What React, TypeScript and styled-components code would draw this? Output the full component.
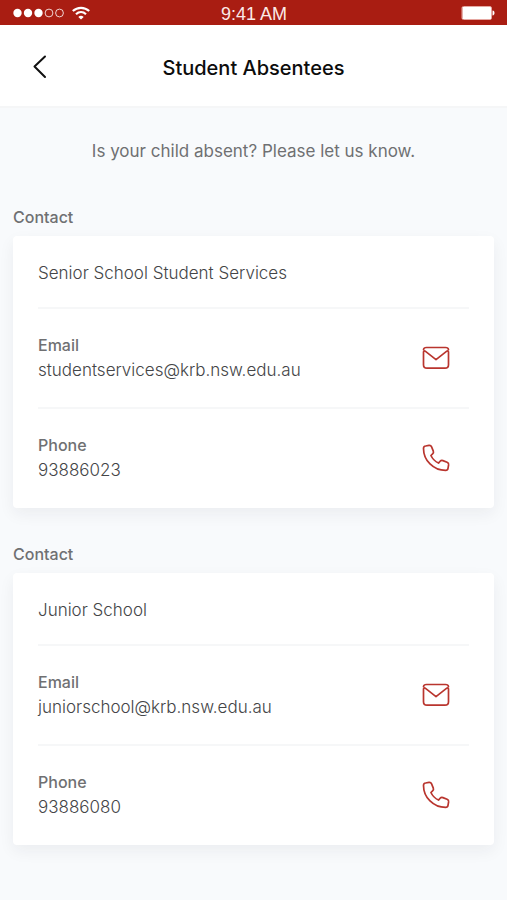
import React from "react";
import styled, { createGlobalStyle } from "styled-components";

const GlobalStyle = createGlobalStyle`
  * { box-sizing: border-box; }
  body {
    margin: 0;
    background: #f8fafc;
    font-family: Inter, "Liberation Sans", sans-serif;
  }
`;

const Page = styled.div`
  min-height: 100vh;
  background: #f8fafc;
`;

const StatusBar = styled.div`
  display: grid;
  grid-template-columns: 1fr auto 1fr;
  align-items: center;
  height: 25px;
  padding: 0 12px 0 13px;
  background: #a91d12;
  color: #fff;
`;

const Signal = styled.div`
  display: flex;
  align-items: center;
  gap: 7px;
`;

const Clock = styled.span`
  padding-top: 3px;
  font: 400 18px/22px "Liberation Sans", Arial, sans-serif;
  color: #fbe9e7;
`;

const BatterySlot = styled.div`
  display: flex;
  justify-content: flex-end;
`;

const Header = styled.header`
  display: grid;
  grid-template-columns: 48px 1fr 48px;
  align-items: center;
  height: 83px;
  padding: 2px 16px 0;
  background: #fff;
  border-bottom: 2px solid #f5f6f7;
`;

const BackButton = styled.button`
  display: flex;
  align-items: center;
  justify-content: center;
  width: 48px;
  height: 48px;
  padding: 0;
  border: 0;
  background: none;
  color: #111;
  cursor: pointer;
`;

const Title = styled.h1`
  margin: 0;
  padding-top: 2px;
  text-align: center;
  font-size: 20px;
  line-height: 24px;
  font-weight: 500;
  color: #0c0c0c;
`;

const Content = styled.main`
  padding: 31px 13px 24px;
`;

const Intro = styled.p`
  margin: 0 0 42px;
  text-align: center;
  font-size: 17px;
  line-height: 24px;
  color: #6f7072;
`;

const Section = styled.section`
  margin-bottom: 34px;
`;

const SectionTitle = styled.h2`
  margin: 0 0 7px;
  font-size: 16px;
  line-height: 24px;
  font-weight: 500;
  color: #6f7072;
`;

const Card = styled.div`
  padding: 0 25px 1px;
  border-radius: 4px;
  background: #fff;
  box-shadow: 0 6px 16px rgba(30, 40, 50, 0.06);
`;

const Name = styled.div`
  display: flex;
  align-items: center;
  height: 71px;
  padding-top: 2px;
  font-size: 17px;
  line-height: 24px;
  font-weight: 350;
  color: #444547;
`;

const Row = styled.div`
  display: flex;
  align-items: center;
  justify-content: space-between;
  height: 100px;
  padding-right: 19px;
  border-top: 2px solid #f6f7f8;
`;

const Label = styled.div`
  font-size: 16px;
  line-height: 25px;
  font-weight: 500;
  color: #6f7072;
`;

const Value = styled.div`
  font-size: 17px;
  line-height: 25px;
  font-weight: 350;
  color: #444547;
`;

const Action = styled.a`
  display: flex;
  color: #b9352e;
`;

const SignalIcon = () => (
  <svg width="52" height="10" viewBox="0 0 52 10" fill="#fff" stroke="#fff">
    <circle cx="4.500" cy="5" r="4.200" stroke="none" />
    <circle cx="15" cy="5" r="4.200" stroke="none" />
    <circle cx="25.500" cy="5" r="4.200" stroke="none" />
    <circle cx="36" cy="5" r="3.900" fill="none" strokeWidth="0.8" />
    <circle cx="46.500" cy="5" r="3.900" fill="none" strokeWidth="0.8" />
  </svg>
);

const WifiIcon = () => (
  <svg width="18" height="14" viewBox="0 0 18 14" fill="none" stroke="#fff" strokeWidth="2.2">
    <path d="M.8 5C5.500.700 12.500.700 17.200 5" />
    <path d="M4 8.200c2.900-2.700 7.100-2.700 10 0" />
    <path d="M9 13.600 6.300 10.900c1.600-1.400 3.800-1.400 5.400 0z" fill="#fff" stroke="none" />
  </svg>
);

const BatteryIcon = () => (
  <svg width="34" height="14" viewBox="0 0 34 14" fill="#fff">
    <rect x="1" y=".5" width="29.500" height="13" rx="1.500" fill="none" stroke="#e6a8a2" />
    <rect x="1.500" y="1" width="28.500" height="12" rx=".5" />
    <path d="M31.500 4.500c1.500.300 2 1.200 2 2.500s-.5 2.200-2 2.500z" />
  </svg>
);

const BackIcon = () => (
  <svg width="14" height="24" viewBox="0 0 14 24" fill="none" stroke="currentColor" strokeWidth="2" strokeLinecap="round" strokeLinejoin="round">
    <path d="M12 1.500 1.500 11.500 12 22" />
  </svg>
);

const MailIcon = () => (
  <svg width="28" height="24" viewBox="0 0 28 24" fill="none" stroke="currentColor" strokeWidth="1.700" strokeLinecap="round" strokeLinejoin="round">
    <path d="M1.500 3.600C1.700 2.200 2.700 1.500 4.500 1.500h19c1.800 0 2.800.700 3 2.100" />
    <path d="M14 13.600 3.200 5.200C2.300 4.600 1.500 5 1.500 6v12.700c0 2.300 1.200 3.500 3.500 3.500h18c2.300 0 3.500-1.200 3.500-3.500V6c0-1-.8-1.400-1.700-.8z" />
  </svg>
);

const PhoneIcon = () => (
  <svg width="28" height="28" viewBox="0 0 28 28" fill="none" stroke="currentColor" strokeWidth="1.700" strokeLinecap="round" strokeLinejoin="round">
    <path d="M3.500 2 7 1.400C8.400 1.200 9.100 1.700 9.600 2.900l1.700 4.200c.4 1.100.2 2-.7 2.800L8.900 11.500c1.700 3.500 4.200 6 7.600 7.600l1.600-1.800c.8-.9 1.700-1.100 2.800-.7l4.200 1.700c1.200.5 1.700 1.200 1.500 2.600L26 24.400c-.2 1.400-1 2-2.400 2C11.500 26.400 1.500 16.500 1.500 4.400c0-1.400.6-2.200 2-2.400z" />
  </svg>
);

const contacts = [
  { name: "Senior School Student Services", email: "studentservices@krb.nsw.edu.au", phone: "93886023" },
  { name: "Junior School", email: "juniorschool@krb.nsw.edu.au", phone: "93886080" },
];

export default function App() {
  return (
    <Page>
      <GlobalStyle />
      <StatusBar>
        <Signal><SignalIcon /><WifiIcon /></Signal>
        <Clock>9:41 AM</Clock>
        <BatterySlot><BatteryIcon /></BatterySlot>
      </StatusBar>
      <Header>
        <BackButton aria-label="Back"><BackIcon /></BackButton>
        <Title>Student Absentees</Title>
      </Header>
      <Content>
        <Intro>Is your child absent? Please let us know.</Intro>
        {contacts.map((c) => (
          <Section key={c.name}>
            <SectionTitle>Contact</SectionTitle>
            <Card>
              <Name>{c.name}</Name>
              <Row>
                <div><Label>Email</Label><Value>{c.email}</Value></div>
                <Action href={`mailto:${c.email}`} aria-label={`Email ${c.name}`}><MailIcon /></Action>
              </Row>
              <Row>
                <div><Label>Phone</Label><Value>{c.phone}</Value></div>
                <Action href={`tel:${c.phone}`} aria-label={`Call ${c.name}`}><PhoneIcon /></Action>
              </Row>
            </Card>
          </Section>
        ))}
      </Content>
    </Page>
  );
}
